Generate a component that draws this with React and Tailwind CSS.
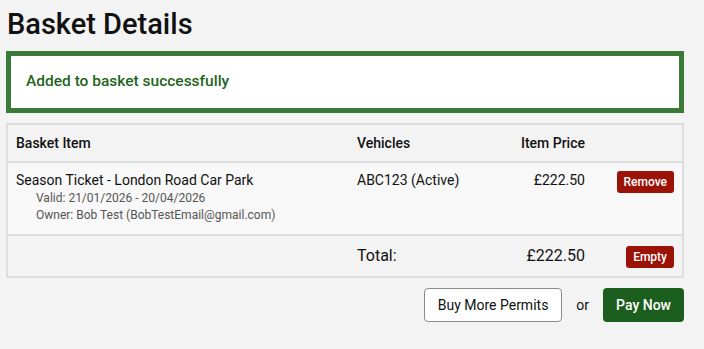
import React from 'react';

const items = [
  {
    name: 'Season Ticket - London Road Car Park',
    valid: 'Valid: 21/01/2026 - 20/04/2026',
    owner: 'Owner: Bob Test (BobTestEmail@gmail.com)',
    vehicle: 'ABC123 (Active)',
    price: '£222.50',
  },
];

const App = () => {
  return (
    <div className="min-h-screen bg-[#f3f3f3] text-[#111] font-['Roboto',sans-serif]">
      <div className="w-[678px] ml-[6px] pt-[7px] pb-[28px]">
        <h1 className="text-[29px] leading-[35px] font-medium ml-[1px]">Basket Details</h1>

        <div className="mt-[9px] h-[62px] border-[5px] border-[#3a7a38] bg-white flex items-center pl-[15px]">
          <span className="text-[15.5px] font-medium text-[#1f6520]">Added to basket successfully</span>
        </div>

        <table className="mt-[10px] w-full border-collapse border-2 border-[#dddddd] table-fixed">
          <colgroup>
            <col className="w-[342px]" />
            <col className="w-[120px]" />
            <col className="w-[124px]" />
            <col />
          </colgroup>
          <thead>
            <tr className="bg-[#f3f3f3] h-[38px] border-b-2 border-[#dddddd]">
              <th className="text-left text-[14px] font-medium px-[8px]">Basket Item</th>
              <th className="text-left text-[14px] font-medium px-[8px]">Vehicles</th>
              <th className="text-right text-[14px] font-medium px-[8px]">Item Price</th>
              <th />
            </tr>
          </thead>
          <tbody>
            {items.map((item) => (
              <tr key={item.name} className="bg-[#f8f8f8] border-b-2 border-[#dddddd] align-top">
                <td className="px-[8px] pt-[7px] pb-[10px]">
                  <div className="text-[14px] leading-[20px]">{item.name}</div>
                  <div className="pl-[20px] text-[12px] leading-[17px] text-[#555]">
                    <div>{item.valid}</div>
                    <div>{item.owner}</div>
                  </div>
                </td>
                <td className="px-[8px] pt-[7px] text-[14px] leading-[20px]">{item.vehicle}</td>
                <td className="px-[8px] pt-[7px] text-[14px] leading-[20px] text-right">{item.price}</td>
                <td className="pr-[8px] pt-[6px] text-right">
                  <button className="h-[22px] px-[7px] rounded-[3px] bg-[#9b1207] text-white text-[12px] font-medium">
                    Remove
                  </button>
                </td>
              </tr>
            ))}
            <tr className="bg-[#f3f3f3] h-[42px]">
              <td />
              <td className="px-[8px] text-[16px]">Total:</td>
              <td className="px-[8px] text-[16px] text-right">£222.50</td>
              <td className="pr-[8px] text-right">
                <button className="h-[22px] px-[7px] rounded-[3px] bg-[#9b1207] text-white text-[12px] font-medium">
                  Empty
                </button>
              </td>
            </tr>
          </tbody>
        </table>

        <div className="mt-[10px] flex justify-end items-center gap-[14px]">
          <button className="h-[34px] px-[13px] rounded-[4px] border border-[#8a8a8a] bg-white text-[14px]">
            Buy More Permits
          </button>
          <span className="text-[14px]">or</span>
          <button className="h-[34px] px-[13px] rounded-[4px] bg-[#1b5e1d] text-white text-[14px] font-medium">
            Pay Now
          </button>
        </div>
      </div>
    </div>
  );
};

export default App;
